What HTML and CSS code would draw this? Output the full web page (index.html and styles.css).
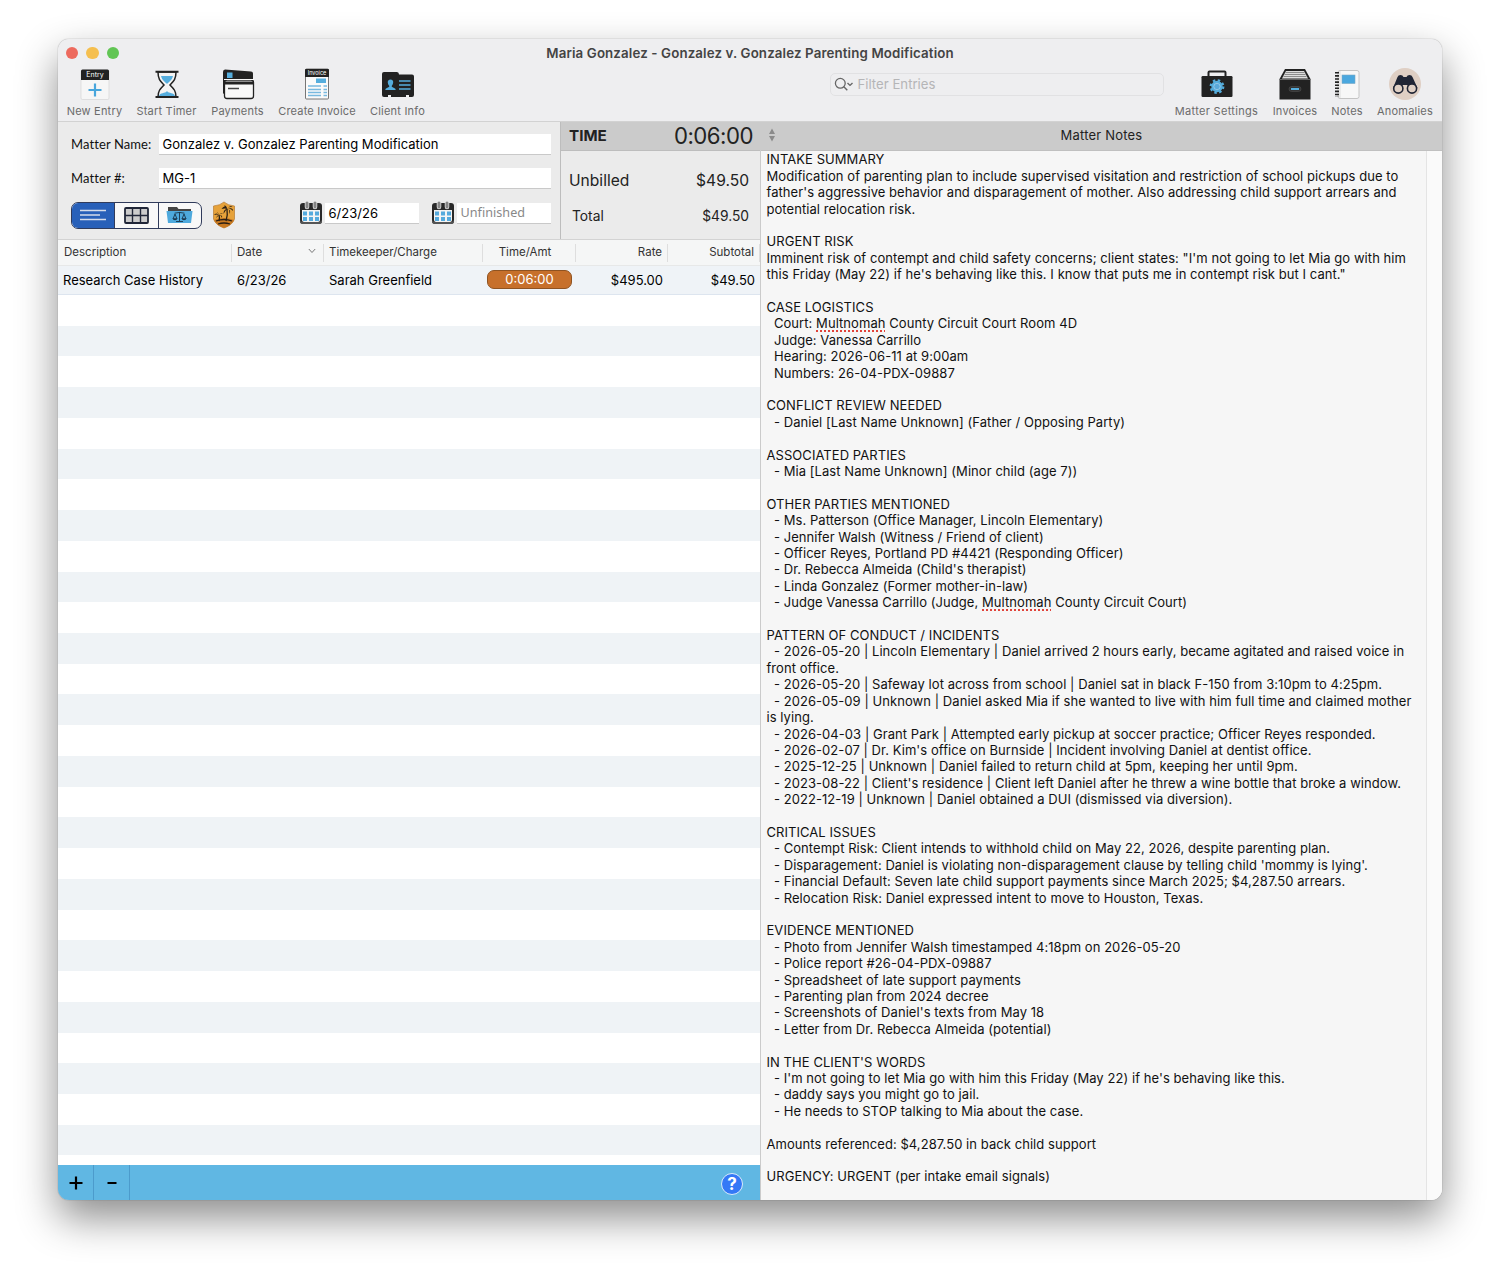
FILE: index.html
```html
<!DOCTYPE html>
<html lang="en">
  <head>
    <meta charset="UTF-8" />
    <title>Maria Gonzalez - Gonzalez v. Gonzalez Parenting Modification</title>
    <link rel="stylesheet" href="styles.css">
  </head>

  <body>
    <svg class="symbols" width="0" height="0">
      <symbol id="calendar" viewBox="0 0 24 24">
        <rect x="1" y="2" width="22" height="21" rx="3" fill="#292929" />
        <path d="M3 9h18v10q0 2-2 2H5q-2 0-2-2z" fill="#f4f4f4" />
        <path d="M1 19v1q0 3 3 3h16q3 0 3-3v-1q-1 2-3 2H4q-2 0-3-2z" fill="#555" />
        <path d="M4 10.500h4v4H4zm6 0h4v4h-4zm6 0h4v4h-4zM4 16h4v4H4zm6 0h4v4h-4zm6 0h4v4h-4z" fill="#55aadd" />
        <path d="M8 2v4M16 2v4" stroke="#e8e8e8" stroke-width="4.500" stroke-linecap="round" />
        <path d="M8 2v4M16 2v4" stroke="#858585" stroke-width="3" stroke-linecap="round" />
      </symbol>
    </svg>

    <div class="window">
      <header>
        <div class="titlebar">
          <div class="lights"><span class="red"></span><span class="yellow"></span><span class="green"></span></div>
          <h1>Maria Gonzalez - Gonzalez v. Gonzalez Parenting Modification</h1>
        </div>
        <div class="toolbar">
          <div class="tools tools-left">
            <div class="tool">
              <svg width="30" height="32" viewBox="0 0 30 32">
                <rect x="1" y="2" width="28" height="29.500" rx="1.500" fill="#f6f6f6" stroke="#d5d5d5" stroke-width=".7" />
                <path d="M1 12V3q0-1.500 1.500-1.500h25Q29 1.500 29 3v9z" fill="#222" />
                <text x="15" y="9" class="entry-text">Entry</text>
                <path d="M15 15.500v13M8.500 22h13" stroke="#48a6dc" stroke-width="2.200" />
              </svg>
              <span>New Entry</span>
            </div>
            <div class="tool">
              <svg width="30" height="32" viewBox="0 0 30 32">
                <path d="M6 4h18c0 7-2 9-6 13 4 4 6 6 6 12H6c0-6 2-8 6-12-4-4-6-6-6-13z" fill="#f3f3f3" stroke="#222" stroke-width="1.500" />
                <path d="M9 8h12c-1 4-3 5-5.300 7.500h-1.400C12 13 10 12 9 8zM7 28c1-4 6-2 8-5 2 3 7 1 8 5z" fill="#55addd" />
                <path d="M3.500 3.700h23M3.500 29h23" stroke="#222" stroke-width="2" />
              </svg>
              <span>Start Timer</span>
            </div>
            <div class="tool">
              <svg width="34" height="32" viewBox="0 0 34 32">
                <path d="M4 1.500l26 2q2 0 2 2v22H4L2 25V4q0-2.500 2-2.500z" fill="#222" />
                <rect x="6" y="4.500" width="5.500" height="5.500" fill="#55addd" />
                <rect x="3.500" y="12" width="29" height="18.500" rx="2.500" fill="#f8f8f8" stroke="#222" stroke-width="1.300" />
                <path d="M3 11.500h30" stroke="#f8f8f8" />
                <path d="M3 15h30" stroke="#222" stroke-width="3" />
                <path d="M7 20.500h11" stroke="#444" stroke-width="1.500" />
              </svg>
              <span>Payments</span>
            </div>
            <div class="tool">
              <svg width="26" height="32" viewBox="0 0 26 32">
                <rect x="1.500" y="1" width="23" height="30" rx="1" fill="#fafafa" stroke="#555" stroke-width=".8" />
                <path d="M1 9V2q0-1 1-1h22q1 0 1 1v7z" fill="#222" />
                <text x="13" y="7" class="invoice-text">Invoice</text>
                <path d="M12 10.500h10v4.500H12z" fill="#55addd" />
                <path d="M4 18h13M4 21.500h13M4 24.500h13M4 27.500h13M19.500 18h3.500M19.500 21.500h3.500M19.500 24.500h3.500M19.500 27.500h3.500" stroke="#78b9df" stroke-width="1.300" />
              </svg>
              <span>Create Invoice</span>
            </div>
            <div class="tool">
              <svg width="34" height="32" viewBox="0 0 34 32">
                <path d="M1 6q0-2 2-2h13q2 0 2 2.500h13q2 0 2 2V27q0 2-2 2h-3v-2h-3v2H10v-2H7v2H3q-2 0-2-2z" fill="#222" />
                <path d="M9.500 11.500c3.500 0 3.300 4 1.200 6.500 0 2 4 1.500 4 4H4.300c0-2.500 4-2 4-4-2.100-2.500-2.300-6.500 1.200-6.500z" fill="#55addd" />
                <path d="M18 13h11.500M18 17h11.500M18 21h11.500" stroke="#55addd" stroke-width="1.400" />
              </svg>
              <span>Client Info</span>
            </div>
          </div>
          <div class="search">
            <svg width="20" height="15" viewBox="0 0 20 15">
              <circle cx="6.300" cy="6.300" r="4.900" fill="none" stroke="#666" stroke-width="1.300" />
              <path d="M9.800 9.800l3.500 3.500M13.500 6l2.500 2.400L18.500 6" fill="none" stroke="#666" stroke-width="1.400" />
            </svg>
            <span>Filter Entries</span>
          </div>
          <div class="tools tools-right">
            <div class="tool">
              <svg width="32" height="32" viewBox="0 0 32 32">
                <path d="M7.500 9V4.500q0-1 1-1h15q1 0 1 1V9" fill="none" stroke="#222" stroke-width="2" />
                <rect x=".5" y="8" width="31" height="21" rx="1.200" fill="#222" />
                <circle cx="16" cy="18.500" r="6.300" fill="none" stroke="#55addd" stroke-width="2.200" stroke-dasharray="2.475" />
                <circle cx="16" cy="18.500" r="4.300" fill="#333" stroke="#55addd" stroke-width="2.800" />
                <circle cx="16" cy="18.500" r="3.200" fill="#5ba9da" stroke="#9fd0ee" stroke-width=".8" />
              </svg>
              <span>Matter Settings</span>
            </div>
            <div class="tool">
              <svg width="34" height="34" viewBox="0 0 34 34">
                <path d="M7 2h20l5.500 10v20.500h-31V12z" fill="#222" />
                <path d="M8 4h18l4 7.500H4z" fill="#ddd" />
                <path d="M7.500 5.500h19M6.500 7.500h21M5.500 9.500h23" stroke="#777" stroke-width=".8" />
                <path d="M1.500 12.500h31" stroke="#666" />
                <rect x="11" y="19.500" width="12" height="5" rx="2.500" fill="#333" stroke="#555" stroke-width=".5" />
                <path d="M13 22h8" stroke="#55addd" stroke-width="1.800" />
              </svg>
              <span>Invoices</span>
            </div>
            <div class="tool">
              <svg width="28" height="32" viewBox="0 0 28 32">
                <rect x="5" y="2.500" width="21" height="28" rx="2" fill="#f7f7f7" stroke="#c4c4c4" />
                <path d="M4 4v25" stroke="#222" stroke-width="4" stroke-dasharray="1.600 1.500" />
                <path d="M7 3v27" stroke="#ddd" />
                <rect x="9" y="7" width="13" height="8.500" fill="#4aa7de" stroke="#7ba8c4" stroke-width=".6" />
              </svg>
              <span>Notes</span>
            </div>
            <div class="tool">
              <svg width="34" height="34" viewBox="0 0 34 34">
                <circle cx="17" cy="17" r="16" fill="#dfcfc4" />
                <path d="M5 21l4.500-11q.7-2 3-2t3 2h3q.7-2 3-2t3 2L29.500 21 24 23l-5-5h-4l-4.500 5z" fill="#202535" />
                <circle cx="10.300" cy="21.500" r="4.600" fill="#dfcfc4" stroke="#202535" stroke-width="1.600" />
                <circle cx="24" cy="21.500" r="4.600" fill="#dfcfc4" stroke="#202535" stroke-width="1.600" />
              </svg>
              <span>Anomalies</span>
            </div>
          </div>
        </div>
      </header>

      <main>
        <section class="entries">
          <div class="matter">
            <div class="matter-form">
              <div class="field"><label>Matter Name:</label><div class="input name">Gonzalez v. Gonzalez Parenting Modification</div></div>
              <div class="field"><label>Matter #:</label><div class="input">MG-1</div></div>
              <div class="controls">
                <div class="segments">
                  <div class="segment active">
                    <svg width="26" height="12" viewBox="0 0 26 12"><path d="M0 1.500h26M0 6h20M0 10.500h26" stroke="#d5dcea" stroke-width="1.600" /></svg>
                  </div>
                  <div class="segment">
                    <svg width="25" height="17" viewBox="0 0 25 17"><rect x="1" y="1" width="23" height="15" rx="1" fill="#ccc" stroke="#202638" stroke-width="1.800" /><path d="M8.500 1v15M16.500 1v15M1 8.500h23" stroke="#202638" stroke-width="1.400" /></svg>
                  </div>
                  <div class="segment">
                    <svg width="27" height="18" viewBox="0 0 27 18">
                      <path d="M2 1h9l1.500 2H25v7H2z" fill="#444" />
                      <path d="M.5 5h26L25 17H2z" fill="#4ea9dd" />
                      <path d="M13.500 6v9M8.500 7.200q5-1.500 10 0M10 15.500h7M9 8l-2 5h4zM18 8l-2 5h4z" fill="none" stroke="#19344b" stroke-width=".9" />
                      <path d="M6.500 12.500h5q-2.500 3.500-5 0zm9 0h5q-2.500 3.500-5 0z" fill="#19344b" />
                    </svg>
                  </div>
                </div>
                <svg class="badge" width="24" height="28" viewBox="0 0 24 28">
                  <path d="M12 1q4 3.500 10.500 4v13q-2 6-10.500 9Q3.500 24 1.500 18V5Q8 4.500 12 1z" fill="#e6a23a" stroke="#b77c35" stroke-width=".7" />
                  <path d="M2 19q10-4 20 0-2 5-10 8-8-3-10-8z" fill="#c87922" />
                  <path d="M4 20q8-3 16 0M6 23q6-2 12 0" fill="none" stroke="#2b2015" stroke-width="1.300" />
                  <path d="M14 20q2-6 1-12M7 20q1-3 0-6" fill="none" stroke="#2b2015" stroke-width="1.300" />
                  <path d="M15.500 8q-3-5-6 0 3-1 6 0-4 0-4 5 2-4 4-5 2 0 2 5 2-4-2-5 3-1 5.500 2 0-4-5.500-2 2-3 5-2-2-3-5 2-1-3-3-4 0 3 3 4zM7 14q-3-3-5 0 3-1 5 0-2 0-3 3 2-2 3-3 2 0 3 3 1-3-3-3 2-2 4-1-2-2-4 1-1-3-2-3z" fill="#2b2015" />
                </svg>
                <svg class="cal" width="24" height="24"><use href="#calendar" /></svg>
                <div class="input date">6/23/26</div>
                <svg class="cal second" width="24" height="24"><use href="#calendar" /></svg>
                <div class="input date unfinished">Unfinished</div>
              </div>
            </div>
            <div class="totals">
              <div class="total time"><b>TIME</b><span>0:06:00</span></div>
              <div class="total unbilled"><span>Unbilled</span><span>$49.50</span></div>
              <div class="total all"><span>Total</span><span>$49.50</span></div>
            </div>
          </div>

          <div class="row table-head">
            <div>Description</div>
            <div class="sorted">Date
              <svg width="8" height="6" viewBox="0 0 8 6"><path d="M.8 1L4 4.500 7.200 1" fill="none" stroke="#777" /></svg>
            </div>
            <div>Timekeeper/Charge</div>
            <div class="center amount">Time/Amt</div>
            <div class="right">Rate</div>
            <div class="right">Subtotal</div>
          </div>
          <div class="row entry">
            <div>Research Case History</div>
            <div>6/23/26</div>
            <div>Sarah Greenfield</div>
            <div class="center"><span class="pill">0:06:00</span></div>
            <div class="right">$495.00</div>
            <div class="right">$49.50</div>
          </div>
          <div class="stripes"></div>
          <div class="bottom-bar">
            <div class="bar-button"><svg width="14" height="14" viewBox="0 0 14 14"><path d="M7 .500v13M.500 7h13" stroke="#000" stroke-width="2.200" /></svg></div>
            <div class="bar-button"><svg width="10" height="14" viewBox="0 0 10 14"><path d="M.500 7h9" stroke="#000" stroke-width="2.200" /></svg></div>
            <div class="help">?</div>
          </div>
        </section>

        <section class="notes">
          <div class="notes-head">
            <svg width="8" height="14" viewBox="0 0 8 14"><path d="M4 .500L7 6H1zM4 13.500L1 8h6z" fill="#8b8b8b" /></svg>
            <span>Matter Notes</span>
          </div>
          <div class="notes-body">
<pre>INTAKE SUMMARY
Modification of parenting plan to include supervised visitation and restriction of school pickups due to
father's aggressive behavior and disparagement of mother. Also addressing child support arrears and
potential relocation risk.

URGENT RISK
Imminent risk of contempt and child safety concerns; client states: "I'm not going to let Mia go with him
this Friday (May 22) if he's behaving like this. I know that puts me in contempt risk but I cant."

CASE LOGISTICS
  Court: <u>Multnomah</u> County Circuit Court Room 4D
  Judge: Vanessa Carrillo
  Hearing: 2026-06-11 at 9:00am
  Numbers: 26-04-PDX-09887

CONFLICT REVIEW NEEDED
  - Daniel [Last Name Unknown] (Father / Opposing Party)

ASSOCIATED PARTIES
  - Mia [Last Name Unknown] (Minor child (age 7))

OTHER PARTIES MENTIONED
  - Ms. Patterson (Office Manager, Lincoln Elementary)
  - Jennifer Walsh (Witness / Friend of client)
  - Officer Reyes, Portland PD #4421 (Responding Officer)
  - Dr. Rebecca Almeida (Child's therapist)
  - Linda Gonzalez (Former mother-in-law)
  - Judge Vanessa Carrillo (Judge, <u>Multnomah</u> County Circuit Court)

PATTERN OF CONDUCT / INCIDENTS
  - 2026-05-20 | Lincoln Elementary | Daniel arrived 2 hours early, became agitated and raised voice in
front office.
  - 2026-05-20 | Safeway lot across from school | Daniel sat in black F-150 from 3:10pm to 4:25pm.
  - 2026-05-09 | Unknown | Daniel asked Mia if she wanted to live with him full time and claimed mother
is lying.
  - 2026-04-03 | Grant Park | Attempted early pickup at soccer practice; Officer Reyes responded.
  - 2026-02-07 | Dr. Kim's office on Burnside | Incident involving Daniel at dentist office.
  - 2025-12-25 | Unknown | Daniel failed to return child at 5pm, keeping her until 9pm.
  - 2023-08-22 | Client's residence | Client left Daniel after he threw a wine bottle that broke a window.
  - 2022-12-19 | Unknown | Daniel obtained a DUI (dismissed via diversion).

CRITICAL ISSUES
  - Contempt Risk: Client intends to withhold child on May 22, 2026, despite parenting plan.
  - Disparagement: Daniel is violating non-disparagement clause by telling child 'mommy is lying'.
  - Financial Default: Seven late child support payments since March 2025; $4,287.50 arrears.
  - Relocation Risk: Daniel expressed intent to move to Houston, Texas.

EVIDENCE MENTIONED
  - Photo from Jennifer Walsh timestamped 4:18pm on 2026-05-20
  - Police report #26-04-PDX-09887
  - Spreadsheet of late support payments
  - Parenting plan from 2024 decree
  - Screenshots of Daniel's texts from May 18
  - Letter from Dr. Rebecca Almeida (potential)

IN THE CLIENT'S WORDS
  - I'm not going to let Mia go with him this Friday (May 22) if he's behaving like this.
  - daddy says you might go to jail.
  - He needs to STOP talking to Mia about the case.

Amounts referenced: $4,287.50 in back child support

URGENCY: URGENT (per intake email signals)</pre>
            <div class="scroller"></div>
          </div>
        </section>
      </main>
    </div>
  </body>
</html>
```

FILE: styles.css
```css
* {
  box-sizing: border-box;
}

body {
  margin: 0;
  padding: 39px 58px 0;
  height: 1276px;
  overflow: hidden;
  background: #fff;
  font-family: Inter, "Liberation Sans", sans-serif;
  font-size: 13px;
  color: #111;
}

svg {
  display: block;
  flex: none;
}

.symbols {
  position: absolute;
}

.window {
  width: 1384px;
  height: 1161px;
  display: flex;
  flex-direction: column;
  overflow: hidden;
  border-radius: 11px;
  background: #ebebeb;
  box-shadow: 0 0 1px rgba(0, 0, 0, 0.55), 0 18px 40px rgba(0, 0, 0, 0.45);
}

/* title and toolbar */
header {
  height: 83px;
  background: #eeeef0;
  border-bottom: 1px solid #d2d2d2;
}

.titlebar {
  display: grid;
  grid-template-columns: 100px 1fr 100px;
  align-items: center;
  height: 28px;
}

.lights {
  display: flex;
  gap: 8px;
  padding-left: 7.5px;
}

.lights span {
  width: 12.5px;
  height: 12.5px;
  border-radius: 50%;
}

.red { background: #ed6a5e; }
.yellow { background: #f5bf4f; }
.green { background: #61c554; }

h1 {
  margin: 0;
  text-align: center;
  font-size: 13.3px;
  font-weight: 600;
  letter-spacing: 0.13px;
  color: #444;
}

.toolbar {
  display: flex;
  height: 54px;
  padding: 0 9px;
}

.tools {
  display: grid;
  gap: 14.5px;
}

.tools-left {
  grid-template-columns: 55px 60px 53px 77px 55px;
}

.tools-right {
  grid-template-columns: 84px 44px 31px 56px;
  margin-left: 11px;
}

.tool {
  display: flex;
  flex-direction: column;
  align-items: center;
  font-size: 11px;
  letter-spacing: 0.2px;
  white-space: nowrap;
  color: #6b6b6b;
}

.tool svg {
  height: 34px;
  margin-bottom: 3px;
}

.tool span {
  line-height: 14px;
}

.tools-right .tool:first-child {
  letter-spacing: 0.32px;
}

.entry-text,
.invoice-text {
  fill: #fff;
  font-size: 7px;
  letter-spacing: 0;
  text-anchor: middle;
}

.invoice-text {
  font-size: 5.5px;
}

.search {
  display: flex;
  align-items: center;
  gap: 4px;
  width: 334px;
  height: 23px;
  margin: 6px 0 0 auto;
  padding: 0 0 1px 3px;
  border: 1px solid #e1e1e3;
  border-radius: 5px;
  font-size: 13.2px;
  color: #b5b5b7;
}

main {
  display: flex;
  flex: 1;
  min-height: 0;
}

/* left side */
.entries {
  display: flex;
  flex-direction: column;
  width: 703px;
  border-right: 1px solid #cbcbcb;
}

.matter {
  display: flex;
  height: 118px;
  border-bottom: 1px solid #d3d3d3;
}

.matter-form {
  width: 502px;
  padding: 12px 9px 0 13px;
}

.field {
  display: flex;
  align-items: center;
  margin-bottom: 13px;
}

.field label {
  width: 88px;
  padding-bottom: 1px;
  font-family: Lato, sans-serif;
  font-size: 13px;
  letter-spacing: 0.1px;
}

.input {
  flex: 1;
  height: 21px;
  padding-left: 3.5px;
  background: #fff;
  border-bottom: 1px solid #c9c9c9;
  line-height: 20px;
  font-size: 13px;
  letter-spacing: 0.03px;
  white-space: nowrap;
  color: #000;
}

.controls {
  display: flex;
  align-items: center;
  height: 28px;
  margin-top: -1px;
}

.segments {
  display: flex;
  width: 131px;
  height: 27px;
  overflow: hidden;
  border: 1px solid #303b5b;
  border-radius: 7px;
  background: #f8f8f8;
}

.segment {
  display: flex;
  flex: 1;
  align-items: center;
  justify-content: center;
}

.segment + .segment {
  border-left: 1px solid #303b5b;
}

.segment.active {
  background: #2860b9;
}

.badge {
  margin-left: 10px;
}

.cal {
  margin: -5px 2px 0 63px;
}

.cal.second {
  margin-left: 12px;
}

.date {
  flex: none;
  width: 94px;
  margin-top: -4px;
}

.unfinished {
  font-family: "Noto Sans", sans-serif;
  font-size: 12.6px;
  color: #888;
}

.totals {
  flex: 1;
  border-left: 1px solid #bdbdbd;
  color: #222;
}

.total {
  display: flex;
  align-items: center;
  justify-content: space-between;
  padding: 0 11px 0 8px;
}

.time {
  height: 29px;
  padding: 0 7px 1px 8px;
  background: #cbcbcb;
  border-bottom: 1px solid #bdbdbd;
  font-size: 15.2px;
}

.time span {
  font-size: 22.2px;
  letter-spacing: -0.5px;
}

.unbilled {
  height: 58px;
  font-size: 15.6px;
}

.all {
  height: 14px;
  padding-left: 11px;
  font-size: 13.8px;
}

.row {
  display: grid;
  grid-template-columns: 174px 92px 159px 93px 92px 92px;
  align-items: center;
  white-space: nowrap;
}

.row > div {
  padding: 0 5px;
}

.row .center {
  display: flex;
  justify-content: center;
}

.row .right {
  text-align: right;
}

.table-head {
  height: 26px;
  background: #f5f6f6;
  border-bottom: 1px solid #e7e8e8;
  font-size: 11.5px;
  color: #333;
}

.table-head > div {
  height: 18px;
  line-height: 16px;
  border-right: 1px solid #dedede;
}

.table-head > div:first-child {
  padding-left: 6px;
}

.table-head .sorted {
  display: flex;
  justify-content: space-between;
}

.sorted svg {
  margin: 4px 2px 0 0;
}

.table-head .amount {
  padding-right: 13px;
}

.entry {
  height: 29px;
  padding-bottom: 1px;
  background: #eff3f7;
  border-bottom: 1px solid #dde5ef;
  font-size: 13px;
  color: #000;
}

.entry .center {
  padding: 0;
}

.pill {
  width: 85px;
  height: 19px;
  border: 1px solid #8f5321;
  border-radius: 7px;
  background: #c7702b;
  line-height: 17px;
  text-align: center;
  color: #fff;
}

.stripes {
  flex: 1;
  background: repeating-linear-gradient(#fff 0 30.73px, #eff3f6 30.73px 61.46px);
}

.bottom-bar {
  display: flex;
  align-items: center;
  height: 35px;
  background: #60b7e3;
}

.bar-button {
  display: flex;
  align-items: center;
  justify-content: center;
  width: 36px;
  height: 35px;
  padding-left: 1px;
  border-right: 1px solid #4c9bcc;
}

.bar-button + .bar-button {
  padding-left: 0;
}

.help {
  width: 22px;
  height: 22px;
  margin: 2px 17px 0 auto;
  border: 1.5px solid #d9ebfb;
  border-radius: 50%;
  background: #3478f6;
  line-height: 20px;
  text-align: center;
  font-size: 17px;
  font-weight: 700;
  color: #fff;
}

/* notes */
.notes {
  flex: 1;
  display: flex;
  flex-direction: column;
  min-width: 0;
}

.notes-head {
  display: flex;
  align-items: center;
  height: 29px;
  padding: 0 15px 2px 7px;
  background: #cbcbcb;
  border-bottom: 1px solid #c0c0c0;
  font-size: 13px;
  letter-spacing: 0.2px;
  color: #222;
}

.notes-head span {
  flex: 1;
  text-align: center;
}

.notes-body {
  display: flex;
  justify-content: space-between;
  flex: 1;
  background: #f6f6f6;
}

pre {
  margin: 0;
  padding: 0.3px 0 0 5.5px;
  font-family: Inter, "Liberation Sans", sans-serif;
  font-size: 13px;
  line-height: 16.414px;
  letter-spacing: 0.06px;
  color: #111;
}

pre u {
  text-decoration: underline dotted #e0433a 2px;
  text-underline-offset: 2px;
  text-decoration-skip-ink: none;
}

.scroller {
  width: 16px;
  border-left: 1px solid #e4e4e4;
  background: #fafafa;
}
```
